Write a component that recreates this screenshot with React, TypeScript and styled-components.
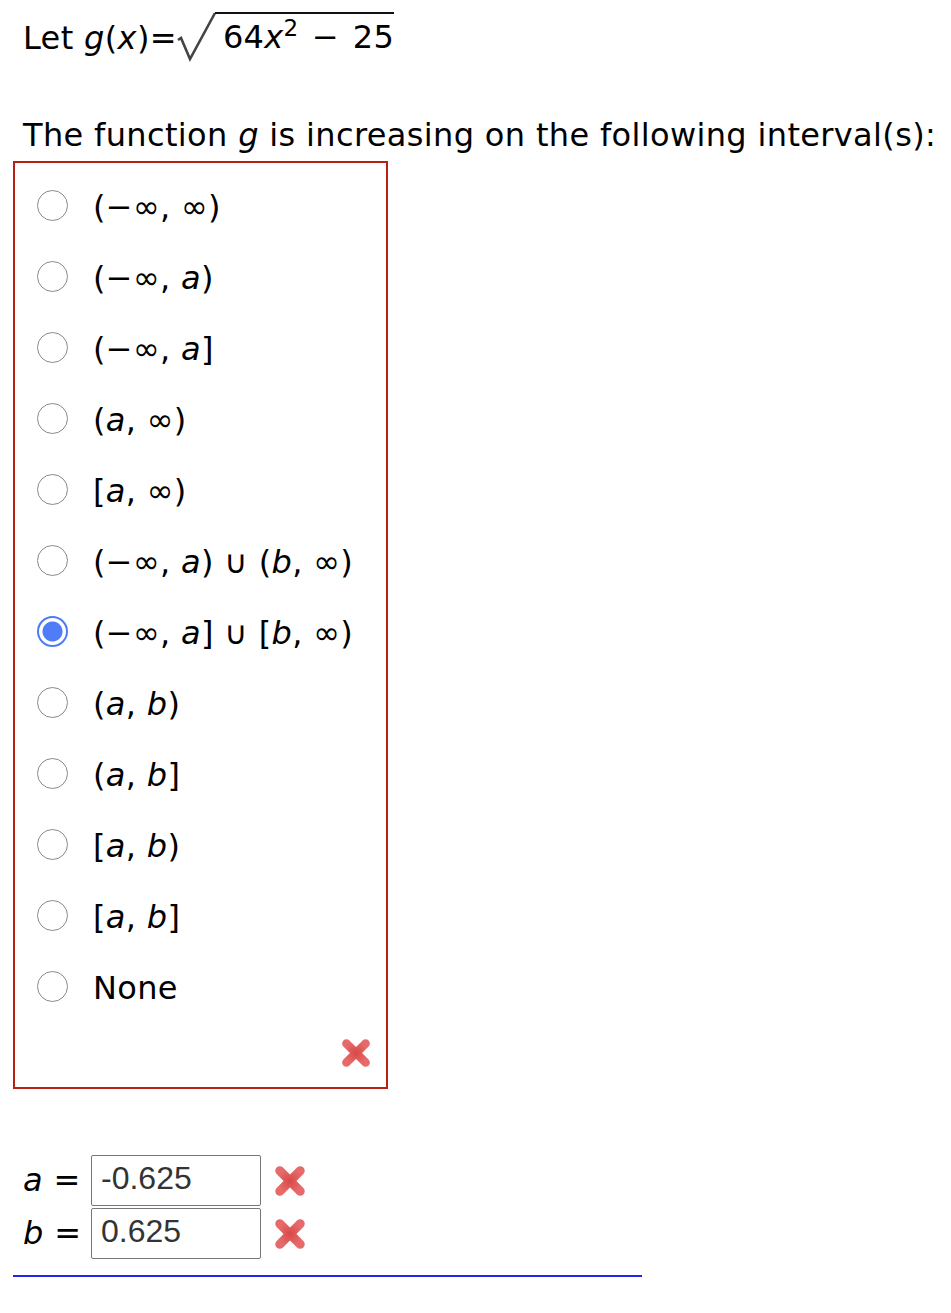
import styled, { createGlobalStyle } from "styled-components";

const GlobalStyle = createGlobalStyle`
  html, body {
    margin: 0;
    padding: 0;
    background: #fff;
  }
  body {
    font-family: "DejaVu Sans", Verdana, sans-serif;
    color: #000;
  }
`;

const options: { key: string; label: React.ReactNode }[] = [
  { key: "1", label: <>(−∞, ∞)</> },
  { key: "2", label: <>(−∞, <i>a</i>)</> },
  { key: "3", label: <>(−∞, <i>a</i>]</> },
  { key: "4", label: <>(<i>a</i>, ∞)</> },
  { key: "5", label: <>[<i>a</i>, ∞)</> },
  { key: "6", label: <>(−∞, <i>a</i>) ∪ (<i>b</i>, ∞)</> },
  { key: "7", label: <>(−∞, <i>a</i>] ∪ [<i>b</i>, ∞)</> },
  { key: "8", label: <>(<i>a</i>, <i>b</i>)</> },
  { key: "9", label: <>(<i>a</i>, <i>b</i>]</> },
  { key: "10", label: <>[<i>a</i>, <i>b</i>)</> },
  { key: "11", label: <>[<i>a</i>, <i>b</i>]</> },
  { key: "12", label: <>None</> },
];

const Cross = ({ size = 30 }: { size?: number }) => (
  <svg width={size} height={size} viewBox="0 0 30 30">
    <defs>
      <radialGradient id="xg" cx="50%" cy="50%" r="60%">
        <stop offset="0%" stopColor="#d94848" />
        <stop offset="100%" stopColor="#e66a6a" />
      </radialGradient>
    </defs>
    <g stroke="url(#xg)" strokeWidth="8" strokeLinecap="round">
      <line x1="6" y1="6" x2="24" y2="24" />
      <line x1="24" y1="6" x2="6" y2="24" />
    </g>
  </svg>
);

const App = () => {
  const selected = "7";
  return (
    <Page>
      <GlobalStyle />
      <Prompt>
        Let <i>g</i>(<i>x</i>)=
        <Sqrt>
          <svg width="40" height="50" viewBox="0 0 40 50">
            <polyline
              points="1,28 4,26 13,47 38,1"
              fill="none"
              stroke="#444"
              strokeWidth="2.6"
              strokeLinejoin="miter"
            />
          </svg>
          <Radicand>
            64<i>x</i>
            <sup>2</sup> − 25
          </Radicand>
        </Sqrt>
      </Prompt>
      <Question>
        The function <i>g</i> is increasing on the following interval(s):
      </Question>
      <ChoiceBox>
        {options.map((o) => (
          <Choice key={o.key}>
            <Radio $checked={o.key === selected} />
            <ChoiceLabel>{o.label}</ChoiceLabel>
          </Choice>
        ))}
        <BoxFooter>
          <Cross size={32} />
        </BoxFooter>
      </ChoiceBox>
      <Answers>
        <AnswerRow>
          <AnswerLabel>
            <i>a</i> =
          </AnswerLabel>
          <AnswerInput readOnly value="-0.625" />
          <Cross size={34} />
        </AnswerRow>
        <AnswerRow>
          <AnswerLabel>
            <i>b</i> =
          </AnswerLabel>
          <AnswerInput readOnly value="0.625" />
          <Cross size={34} />
        </AnswerRow>
      </Answers>
      <Rule />
    </Page>
  );
};

export default App;

const Page = styled.div`
  padding: 10px 0 0 13px;
  font-size: 32px;
  letter-spacing: 0.35px;
  font-family: "DejaVu Sans", Verdana, sans-serif;
`;

const Prompt = styled.div`
  display: flex;
  align-items: flex-end;
  padding-left: 10px;
  height: 47px;
  line-height: 37px;
  white-space: pre;

  i {
    font-style: italic;
  }
`;

const Sqrt = styled.span`
  display: inline-flex;
  align-items: flex-start;
  margin-left: 6px;
  height: 49px;
  align-self: flex-start;
  margin-top: 2px;

  svg {
    display: block;
    margin-left: -6px;
  }
`;

const Radicand = styled.span`
  display: inline-block;
  border-top: 2.5px solid #111;
  margin-left: -2px;
  padding: 5px 0 0 8px;
  line-height: 37px;
  word-spacing: 3px;

  sup {
    font-size: 23px;
    vertical-align: 0;
    position: relative;
    top: -12px;
    line-height: 0;
  }
`;

const Question = styled.div`
  padding: 60px 0 0 10px;
  line-height: 37px;
  height: 42px;
`;

const ChoiceBox = styled.div`
  box-sizing: border-box;
  width: 375px;
  border: 2px solid #b82015;
  padding: 7px 14px 18px 22px;
  margin-top: 2px;
`;

const Choice = styled.div`
  display: flex;
  align-items: center;
  height: 71px;
`;

const Radio = styled.span<{ $checked: boolean }>`
  box-sizing: border-box;
  flex: none;
  width: 31px;
  height: 31px;
  border-radius: 50%;
  border: ${(p) => (p.$checked ? "2px solid #4c7cf5" : "1.5px solid #8a8a8a")};
  background: ${(p) =>
    p.$checked ? "radial-gradient(circle, #4f7df7 0 9.5px, #fff 10.5px)" : "#fff"};
`;

const ChoiceLabel = styled.span`
  margin-left: 25px;
  padding-top: 4px;
  line-height: 37px;
  white-space: pre;
`;

const BoxFooter = styled.div`
  display: flex;
  justify-content: flex-end;
  padding-top: 15px;

  svg {
    display: block;
  }
`;

const Answers = styled.div`
  display: flex;
  flex-direction: column;
  gap: 2px;
  margin-top: 66px;
  padding-left: 10px;
`;

const AnswerRow = styled.div`
  display: flex;
  align-items: center;
  height: 51px;

  svg {
    margin-left: 12px;
  }
`;

const AnswerLabel = styled.span`
  width: 68px;
  white-space: pre;
  line-height: 37px;
`;

const AnswerInput = styled.input`
  box-sizing: border-box;
  width: 170px;
  height: 51px;
  border: 1.5px solid #777;
  border-radius: 2px;
  padding: 0 0 4px 9px;
  font-family: "Liberation Sans", Arial, sans-serif;
  font-size: 32px;
  letter-spacing: 0;
  color: #333;
  background: #fff;
  outline: none;
`;

const Rule = styled.div`
  width: 629px;
  height: 2px;
  background: #2222ee;
  margin-top: 16px;
`;
